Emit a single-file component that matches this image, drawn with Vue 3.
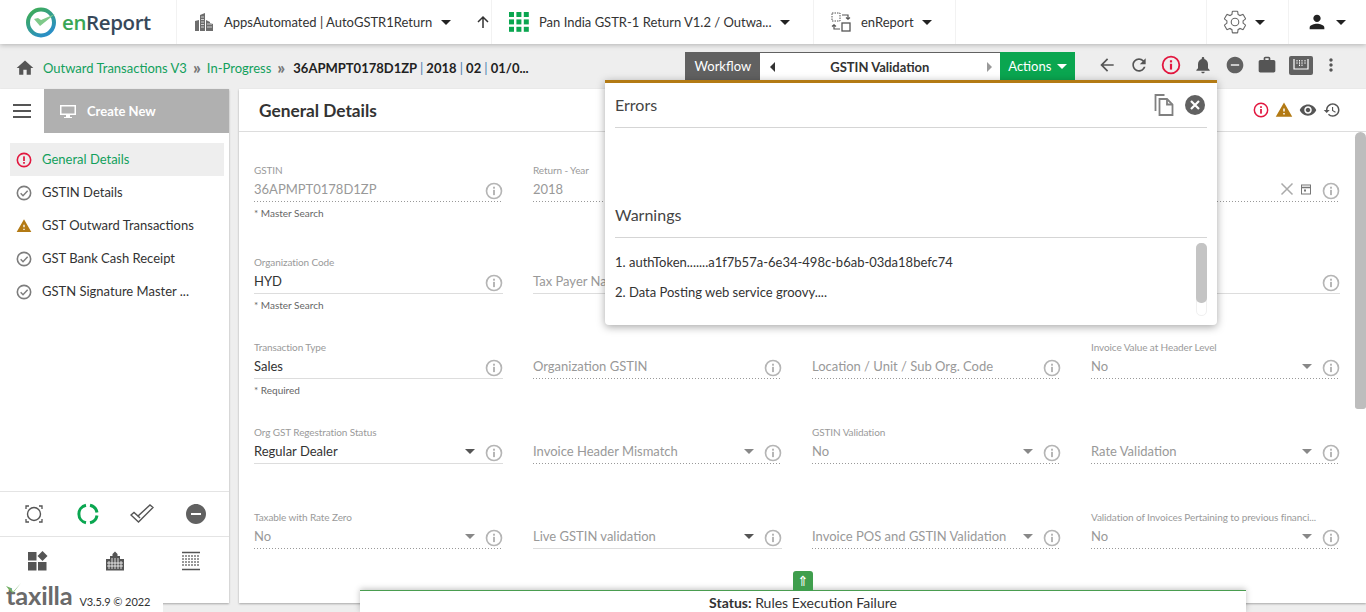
<template>
  <div class="page">
    <svg class="defs" width="0" height="0">
      <symbol id="i-info" viewBox="0 0 24 24">
        <circle cx="12" cy="12" r="10" fill="none" stroke="currentColor" stroke-width="2.200" />
        <rect x="10.700" y="10.500" width="2.600" height="7" fill="currentColor" />
        <rect x="10.700" y="6.300" width="2.600" height="2.600" fill="currentColor" />
      </symbol>
      <symbol id="i-error" viewBox="0 0 24 24">
        <circle cx="12" cy="12" r="10" fill="none" stroke="currentColor" stroke-width="2.400" />
        <rect x="10.700" y="6.500" width="2.600" height="7" fill="currentColor" />
        <rect x="10.700" y="15" width="2.600" height="2.600" fill="currentColor" />
      </symbol>
      <symbol id="i-check" viewBox="0 0 24 24">
        <circle cx="12" cy="12" r="10" fill="none" stroke="currentColor" stroke-width="2.400" />
        <path d="M7 12.500l3.500 3.500L17.500 8.500" fill="none" stroke="currentColor" stroke-width="2.200" />
      </symbol>
      <symbol id="i-warn" viewBox="0 0 24 24">
        <path d="M1 21h22L12 2 1 21zm12-3h-2v-2h2v2zm0-4h-2v-4h2v4z" fill="currentColor" />
      </symbol>
      <symbol id="i-minus" viewBox="0 0 24 24">
        <path d="M12 2C6.480 2 2 6.480 2 12s4.480 10 10 10 10-4.480 10-10S17.520 2 12 2zm5 11H7v-2h10v2z" fill="currentColor" />
      </symbol>
    </svg>

    <header class="topbar">
      <div class="logo">
        <svg width="32" height="32" viewBox="0 0 32 32">
          <defs>
            <linearGradient id="ring" x1="0" y1="0" x2="0.6" y2="1">
              <stop offset="0" stop-color="#3fae4f" />
              <stop offset="1" stop-color="#2a8fc4" />
            </linearGradient>
          </defs>
          <circle cx="16" cy="16.500" r="13" fill="none" stroke="url(#ring)" stroke-width="4" />
          <path d="M9 13l6 7L30 8l-14 6-3-2z" fill="#7fc98a" />
        </svg>
        <span class="logo-text"><span class="en">en</span>Report</span>
      </div>

      <div class="seg seg-apps">
        <svg class="seg-icon" width="20" height="20" viewBox="0 0 20 20">
          <path d="M1 19V9l4-1v11zM6 19V3l5-2v18zM12 19V8l4 2v1l3 1v7z" fill="#6d6d6d" />
          <path d="M7 5h3M7 7.500h3M7 10h3M7 12.500h3M7 15h3M13 12h5M13 15h5" stroke="#e8e8e8" stroke-width="0.800" />
        </svg>
        <span class="seg-text">AppsAutomated | AutoGSTR1Return</span>
        <span class="caret"></span>
        <svg class="up" width="14" height="14" viewBox="0 0 14 14">
          <path d="M7 13V2M2 7l5-5 5 5" fill="none" stroke="#333" stroke-width="1.500" />
        </svg>
      </div>

      <div class="seg seg-pan">
        <svg class="seg-icon" width="20" height="20" viewBox="0 0 20 20" fill="#0aa650">
          <rect v-for="c in gridCells" :key="c.k" :x="c.x" :y="c.y" width="5" height="5" />
        </svg>
        <span class="seg-text">Pan India GSTR-1 Return V1.2 / Outwa...</span>
        <span class="caret"></span>
      </div>

      <div class="seg seg-en">
        <svg class="seg-icon" width="20" height="20" viewBox="0 0 20 20" fill="none" stroke="#555">
          <rect x="1" y="1" width="8" height="8" stroke-dasharray="1.500 1" />
          <rect x="11" y="11" width="8" height="8" stroke-width="1.300" />
          <path d="M11 3h6v4M15 5.500l2 1.800 2-1.800M9 17H3v-4M1 14.500l2-1.800 2 1.800" stroke-width="1.200" />
        </svg>
        <span class="seg-text">enReport</span>
        <span class="caret"></span>
      </div>

      <div class="top-spacer"></div>

      <div class="seg seg-gear">
        <svg width="26" height="26" viewBox="0 0 24 24" fill="none" stroke="#666" stroke-width="1">
          <path d="M19.430 12.980c.04-.32.07-.64.07-.98s-.03-.66-.07-.98l2.110-1.650c.19-.15.24-.42.12-.64l-2-3.460c-.12-.22-.39-.3-.61-.22l-2.490 1c-.52-.4-1.080-.73-1.690-.98l-.38-2.650C14.460 2.180 14.250 2 14 2h-4c-.25 0-.46.18-.49.42l-.38 2.650c-.61.25-1.170.59-1.690.98l-2.490-1c-.23-.09-.49 0-.61.22l-2 3.460c-.13.22-.07.49.12.64l2.110 1.650c-.04.32-.07.65-.07.98s.03.66.07.98l-2.110 1.650c-.19.15-.24.42-.12.64l2 3.460c.12.22.39.3.61.22l2.490-1c.52.4 1.080.73 1.690.98l.38 2.650c.03.24.24.42.49.42h4c.25 0 .46-.18.49-.42l.38-2.650c.61-.25 1.170-.59 1.690-.98l2.490 1c.23.09.49 0 .61-.22l2-3.460c.12-.22.07-.49-.12-.64l-2.110-1.650z" />
          <circle cx="12" cy="12" r="3.500" />
        </svg>
        <span class="caret"></span>
      </div>
      <div class="seg seg-user">
        <svg width="22" height="22" viewBox="0 0 24 24" fill="#222">
          <path d="M12 12c2.210 0 4-1.790 4-4s-1.790-4-4-4-4 1.790-4 4 1.790 4 4 4zm0 2c-2.670 0-8 1.340-8 4v2h16v-2c0-2.660-5.330-4-8-4z" />
        </svg>
        <span class="caret"></span>
      </div>
    </header>

    <div class="crumbs">
      <svg class="home" width="20" height="20" viewBox="0 0 24 24" fill="#555">
        <path d="M10 20v-6h4v6h5v-8h3L12 3 2 12h3v8z" />
      </svg>
      <span class="crumb-link">Outward Transactions V3</span>
      <span class="chev">»</span>
      <span class="crumb-link">In-Progress</span>
      <span class="chev">»</span>
      <span class="crumb-cur">36APMPT0178D1ZP <i>|</i> 2018 <i>|</i> 02 <i>|</i> 01/0...</span>

      <div class="workflow">
        <span class="wf-label">Workflow</span>
        <div class="wf-nav">
          <span class="tri-left"></span>
          <span class="wf-name">GSTIN Validation</span>
          <span class="tri-right"></span>
        </div>
        <span class="wf-actions">Actions<span class="caret caret-white"></span></span>
      </div>

      <div class="tools">
        <svg width="20" height="20" viewBox="0 0 24 24" fill="#555"><path d="M20 11H7.830l5.590-5.590L12 4l-8 8 8 8 1.410-1.410L7.830 13H20v-2z" /></svg>
        <svg width="20" height="20" viewBox="0 0 24 24" fill="#555"><path d="M17.650 6.350C16.200 4.900 14.210 4 12 4c-4.420 0-7.990 3.580-7.990 8s3.570 8 7.990 8c3.730 0 6.840-2.550 7.730-6h-2.080c-.82 2.330-3.040 4-5.650 4-3.310 0-6-2.690-6-6s2.690-6 6-6c1.660 0 3.140.69 4.220 1.780L13 11h7V4l-2.350 2.350z" /></svg>
        <svg class="red" width="20" height="20"><use href="#i-info" /></svg>
        <svg width="20" height="20" viewBox="0 0 24 24" fill="#555"><path d="M12 22c1.100 0 2-.9 2-2h-4c0 1.100.9 2 2 2zm6-6v-5c0-3.070-1.630-5.640-4.500-6.320V4c0-.83-.67-1.500-1.500-1.500s-1.500.67-1.500 1.500v.68C7.640 5.360 6 7.920 6 11v5l-2 2v1h16v-1l-2-2z" /></svg>
        <svg class="grey" width="20" height="20"><use href="#i-minus" /></svg>
        <svg width="20" height="20" viewBox="0 0 24 24" fill="#555"><path d="M20 6h-4V4c0-1.110-.89-2-2-2h-4c-1.110 0-2 .89-2 2v2H4c-1.110 0-1.990.89-1.990 2L2 19c0 1.110.89 2 2 2h16c1.110 0 2-.89 2-2V8c0-1.110-.89-2-2-2zm-6 0h-4V4h4v2z" /></svg>
        <span class="kbd">
          <svg width="16" height="12" viewBox="0 0 16 12" fill="none" stroke="#fff">
            <path d="M1 0v10h14V0" stroke-width="1.200" />
            <path d="M4 1v4M6.500 1v6M9 1v6M12 1v4" stroke-dasharray="1.500 0.800" />
          </svg>
        </span>
        <svg class="dots" width="20" height="20" viewBox="0 0 24 24" fill="#555"><path d="M12 8c1.100 0 2-.9 2-2s-.9-2-2-2-2 .9-2 2 .9 2 2 2zm0 2c-1.100 0-2 .9-2 2s.9 2 2 2 2-.9 2-2-.9-2-2-2zm0 6c-1.100 0-2 .9-2 2s.9 2 2 2 2-.9 2-2-.9-2-2-2z" /></svg>
      </div>
    </div>

    <div class="body">
      <aside class="sidebar">
        <div class="side-top">
          <span class="burger"><i></i><i></i><i></i></span>
          <div class="create">
            <svg width="16" height="15" viewBox="0 0 16 15" fill="#fff">
              <path d="M0 1h16v10h-6v2h2v1H4v-1h2v-2H0zM1.500 2.500v7h13v-7z" fill-rule="evenodd" />
            </svg>
            <span>Create New</span>
          </div>
        </div>

        <nav class="side-nav">
          <div v-for="item in navItems" :key="item.name" class="nav-item" :class="{ active: item.active }">
            <svg width="16" height="16" :class="item.cls"><use :href="item.icon" /></svg>
            <span class="nav-text">{{ item.name }}</span>
          </div>
        </nav>

        <div class="side-row side-row-a">
          <svg width="20" height="20" viewBox="0 0 20 20" fill="none" stroke="#555">
            <circle cx="10" cy="10" r="6.500" stroke-width="1.400" />
            <path d="M2 5V2h3M15 2h3v3M18 15v3h-3M5 18H2v-3" stroke-width="1.300" />
          </svg>
          <svg width="22" height="22" viewBox="0 0 22 22" fill="none" stroke="#0aa650" stroke-width="3">
            <path d="M9 2.200A9 9 0 0 0 9 19.800M13 2.200A9 9 0 0 1 20 9.500M20 12.500A9 9 0 0 1 13 19.800" />
          </svg>
          <svg width="24" height="20" viewBox="0 0 24 20" fill="none" stroke="#555" stroke-width="1.400">
            <path d="M1 11l3-2.500 4 3.500L20 1l3 2.500L8.500 18z" />
            <path d="M8 12l2 2" />
          </svg>
          <svg class="grey" width="24" height="24"><use href="#i-minus" /></svg>
        </div>
        <div class="side-row side-row-b">
          <svg width="20" height="20" viewBox="0 0 20 20" fill="#555">
            <rect x="0" y="1" width="8.500" height="8.500" />
            <rect x="0" y="11" width="8.500" height="8.500" />
            <rect x="10" y="11" width="8.500" height="8.500" />
            <path d="M14.500 0l5 5-5 5-5-5z" />
          </svg>
          <svg width="20" height="20" viewBox="0 0 20 20" fill="#555">
            <path d="M1 19.500V8h4V5h2.500V3L10 .5 12.500 3v2H15v3h4v11.500z" />
            <path d="M4 10v8M7 7v11M10 7v11M13 7v11M16 10v8M2 12h16M2 15h16" stroke="#fff" stroke-width="0.800" />
          </svg>
          <svg width="20" height="20" viewBox="0 0 20 20" fill="none" stroke="#555">
            <path d="M1 1.500h18M1 18.500h18" stroke-width="1.600" />
            <path d="M1 5h18M1 8h18M1 11h18M1 14h18" stroke-dasharray="2 1" stroke-width="1.300" opacity="0.800" />
          </svg>
        </div>
      </aside>

      <main class="card">
        <div class="card-head">
          <h1>General Details</h1>
          <div class="head-icons">
            <svg class="red" width="16" height="16"><use href="#i-info" /></svg>
            <svg class="amber" width="18" height="18"><use href="#i-warn" /></svg>
            <svg width="18" height="18" viewBox="0 0 24 24" fill="#555"><path d="M12 4.500C7 4.500 2.730 7.610 1 12c1.730 4.390 6 7.500 11 7.500s9.270-3.110 11-7.500c-1.730-4.390-6-7.500-11-7.500zM12 17c-2.760 0-5-2.240-5-5s2.240-5 5-5 5 2.240 5 5-2.240 5-5 5zm0-8c-1.660 0-3 1.340-3 3s1.340 3 3 3 3-1.340 3-3-1.340-3-3-3z" /></svg>
            <svg width="18" height="18" viewBox="0 0 24 24" fill="#555"><path d="M13 3c-4.970 0-9 4.030-9 9H1l3.890 3.890.07.14L9 12H6c0-3.870 3.130-7 7-7s7 3.130 7 7-3.130 7-7 7c-1.930 0-3.680-.79-4.940-2.060l-1.420 1.420C8.270 19.990 10.510 21 13 21c4.970 0 9-4.030 9-9s-4.030-9-9-9zm-1 5v5l4.280 2.540.72-1.210-3.500-2.080V8H12z" /></svg>
          </div>
        </div>

        <div class="form">
          <div v-for="(f, i) in fields" :key="i" class="field">
            <div class="f-label">{{ f.label }}</div>
            <div class="f-row">
              <div class="f-input" :class="{ solid: f.solid, muted: f.muted }">
                <span class="f-value">{{ f.value }}</span>
                <svg v-if="f.clear" class="f-clear" width="14" height="14" viewBox="0 0 14 14" fill="none" stroke="#aaa" stroke-width="1.500">
                  <path d="M1.500 1.500l11 11M12.500 1.500l-11 11" />
                </svg>
                <svg v-if="f.clear" class="f-cal" width="12" height="12" viewBox="0 0 12 12" fill="none" stroke="#777">
                  <rect x="1.500" y="2" width="9" height="9" />
                  <path d="M1.500 4.500h9" stroke-width="1.500" />
                  <rect x="4" y="6.500" width="2" height="2" fill="#777" stroke="none" />
                </svg>
                <span v-if="f.select" class="f-caret" :class="{ strong: f.solid }"></span>
              </div>
              <svg class="f-info" width="18" height="18"><use href="#i-info" /></svg>
            </div>
            <div v-if="f.hint" class="f-hint">{{ f.hint }}</div>
          </div>
        </div>

        <div class="main-scroll"></div>
      </main>
    </div>

    <section class="popover">
      <div class="pop-head">
        <span class="pop-title">Errors</span>
        <svg class="pop-copy" width="20" height="22" viewBox="0 0 20 22" fill="none" stroke="#808080" stroke-width="1.800">
          <path d="M1.500 17V1h9" />
          <path d="M5.500 5h7.500l5.500 5.500V21H5.500z" />
          <path d="M13 5v5.500h5.500" />
        </svg>
        <svg width="20" height="20" viewBox="0 0 20 20">
          <circle cx="10" cy="10" r="10" fill="#616161" />
          <path d="M6 6l8 8M14 6l-8 8" stroke="#fff" stroke-width="2.200" />
        </svg>
      </div>
      <div class="pop-errors"></div>
      <div class="pop-head">
        <span class="pop-title">Warnings</span>
      </div>
      <div class="pop-list">
        <p>1. authToken.......a1f7b57a-6e34-498c-b6ab-03da18befc74</p>
        <p>2. Data Posting web service groovy....</p>
        <div class="pop-track"><div class="pop-thumb"></div></div>
      </div>
    </section>

    <div class="brand">
      <span class="brand-mark">
        <svg class="brand-tick" width="16" height="12" viewBox="0 0 16 12"><path d="M0 3l5 2 2 4L15 0 7 10 4 8z" fill="#6fae62" /></svg>
        taxilla
      </span>
      <span class="brand-ver">V3.5.9 © 2022</span>
    </div>

    <div class="status">
      <button class="status-tab">⇑</button>
      <span class="status-key">Status:</span> Rules Execution Failure
    </div>
  </div>
</template>

<script setup>
const gridCells = []
for (let r = 0; r < 3; r++) {
  for (let c = 0; c < 3; c++) {
    gridCells.push({ k: `${r}-${c}`, x: c * 7.4, y: r * 7.4 })
  }
}

const navItems = [
  { name: 'General Details', icon: '#i-error', active: true, cls: 'red' },
  { name: 'GSTIN Details', icon: '#i-check', cls: 'soft' },
  { name: 'GST Outward Transactions', icon: '#i-warn', cls: 'amber' },
  { name: 'GST Bank Cash Receipt', icon: '#i-check', cls: 'soft' },
  { name: 'GSTN Signature Master ...', icon: '#i-check', cls: 'soft' },
]

const fields = [
  { label: 'GSTIN', value: '36APMPT0178D1ZP', muted: true, hint: '* Master Search' },
  { label: 'Return - Year', value: '2018', muted: true },
  { label: '', value: '', muted: true },
  { label: '', value: '', muted: true, clear: true },

  { label: 'Organization Code', value: 'HYD', solid: true, hint: '* Master Search' },
  { label: '', value: 'Tax Payer Name', solid: true, muted: true },
  { label: '', value: '', solid: true, muted: true },
  { label: '', value: '', solid: true, muted: true },

  { label: 'Transaction Type', value: 'Sales', solid: true, hint: '* Required' },
  { label: '', value: 'Organization GSTIN', muted: true },
  { label: '', value: 'Location / Unit / Sub Org. Code', muted: true },
  { label: 'Invoice Value at Header Level', value: 'No', select: true, muted: true },

  { label: 'Org GST Regestration Status', value: 'Regular Dealer', select: true, solid: true },
  { label: '', value: 'Invoice Header Mismatch', select: true, muted: true },
  { label: 'GSTIN Validation', value: 'No', select: true, muted: true },
  { label: '', value: 'Rate Validation', select: true, muted: true },

  { label: 'Taxable with Rate Zero', value: 'No', select: true, muted: true },
  { label: '', value: 'Live GSTIN validation', select: true, solid: true, muted: true },
  { label: '', value: 'Invoice POS and GSTIN Validation', select: true, muted: true },
  { label: 'Validation of Invoices Pertaining to previous financi...', value: 'No', select: true, muted: true },
]
</script>

<style>
html,
body {
  margin: 0;
  background: #eeeeee;
}
</style>

<style scoped>
.page {
  position: relative;
  width: 1366px;
  height: 612px;
  overflow: hidden;
  display: flex;
  flex-direction: column;
  background: #eeeeee;
  font-family: Lato, "Open Sans", sans-serif;
  font-size: 13px;
  color: #333333;
}

.defs {
  position: absolute;
}

.red {
  color: #e2173f;
}

.amber {
  color: #b37a14;
}

.grey {
  color: #616161;
}

.soft {
  color: #7d7d7d;
}

.caret {
  display: inline-block;
  width: 0;
  height: 0;
  border-left: 5px solid transparent;
  border-right: 5px solid transparent;
  border-top: 5px solid #222222;
}

/* top bar */
.topbar {
  height: 44px;
  flex: none;
  display: flex;
  background: #ffffff;
  box-shadow: 0 1px 5px rgba(0, 0, 0, 0.25);
  position: relative;
  z-index: 2;
}

.logo {
  width: 177px;
  flex: none;
  display: flex;
  align-items: center;
  padding-left: 25px;
  gap: 5px;
  box-sizing: border-box;
  border-right: 1px solid #f2f2f2;
}

.logo-text {
  font-family: "Open Sans", sans-serif;
  font-size: 20.500px;
  font-weight: 600;
  letter-spacing: -0.4px;
  color: #37485a;
}

.en {
  color: #3aa655;
}

.seg {
  display: flex;
  align-items: center;
  flex: none;
  box-sizing: border-box;
  border-right: 1px solid #f2f2f2;
}

.seg-text {
  font-size: 13px;
  color: #333333;
}

.seg-apps {
  width: 315px;
  padding-left: 17px;
}

.seg-apps .seg-text {
  margin-left: 10px;
  margin-right: 9px;
}

.up {
  margin-left: 25px;
}

.seg-pan {
  width: 322px;
  padding-left: 17px;
}

.seg-pan .seg-text {
  margin-left: 10px;
  margin-right: 8px;
}

.seg-en {
  width: 142px;
  padding-left: 17px;
}

.seg-en .seg-text {
  margin-left: 10px;
  margin-right: 8px;
}

.top-spacer {
  flex: 1;
}

.seg-gear {
  width: 82px;
  padding-left: 15px;
  gap: 7px;
  border-left: 1px solid #f2f2f2;
  border-right: 0;
}

.seg-user {
  width: 78px;
  padding-left: 17px;
  gap: 8px;
  border-left: 1px solid #f2f2f2;
  border-right: 0;
}

/* breadcrumb */
.crumbs {
  height: 45px;
  flex: none;
  display: flex;
  align-items: center;
  padding: 2px 0 0 15px;
  box-sizing: border-box;
}

.home {
  margin-right: 8px;
}

.crumb-link {
  color: #12a05c;
}

.chev {
  width: 10px;
  margin: 0 5px;
  text-align: center;
  color: #777777;
  font-weight: 900;
  font-size: 17px;
  line-height: 14px;
}

.crumb-cur {
  font-weight: 700;
  color: #222222;
  width: 392px;
  margin-left: 2px;
  flex: none;
}

.crumb-cur i {
  font-style: normal;
  font-weight: 400;
  color: #4a7fb0;
}

.workflow {
  display: flex;
  height: 28px;
  align-self: flex-start;
  margin-top: 6px;
}

.wf-label {
  width: 75px;
  background: #616161;
  color: #ffffff;
  display: flex;
  align-items: center;
  justify-content: center;
}

.wf-nav {
  width: 240px;
  box-sizing: border-box;
  background: #ffffff;
  border-top: 1px solid #616161;
  display: flex;
  align-items: center;
  padding: 0 8px 0 10px;
}

.wf-name {
  flex: 1;
  padding-right: 3px;
  text-align: center;
  font-weight: 700;
  color: #333333;
}

.tri-left {
  border-top: 5px solid transparent;
  border-bottom: 5px solid transparent;
  border-right: 5px solid #333333;
}

.tri-right {
  border-top: 5px solid transparent;
  border-bottom: 5px solid transparent;
  border-left: 5px solid #999999;
}

.wf-actions {
  width: 75px;
  background: #0aa650;
  color: #ffffff;
  display: flex;
  align-items: center;
  justify-content: center;
  gap: 6px;
}

.caret-white {
  border-top-color: #ffffff;
}

.tools {
  margin-left: 22px;
  display: flex;
  align-items: center;
  gap: 12px;
  margin-top: -5px;
}

.kbd {
  width: 24px;
  height: 19px;
  border-radius: 2px;
  background: #616161;
  display: flex;
  align-items: center;
  justify-content: center;
}

.dots {
  margin-left: -4px;
}

/* body */
.body {
  flex: 1;
  display: flex;
  gap: 10px;
  padding-bottom: 9px;
  min-height: 0;
}

.sidebar {
  width: 229px;
  flex: none;
  background: #ffffff;
  display: flex;
  flex-direction: column;
  box-shadow: 0 1px 2px rgba(0, 0, 0, 0.3);
}

.side-top {
  display: flex;
  height: 44px;
  flex: none;
}

.burger {
  width: 44px;
  display: flex;
  flex-direction: column;
  justify-content: center;
  align-items: center;
  gap: 4px;
}

.burger i {
  display: block;
  width: 18px;
  height: 2px;
  background: #555555;
}

.create {
  flex: 1;
  background: #b0b0b0;
  color: #ffffff;
  font-weight: 700;
  display: flex;
  align-items: center;
  padding-left: 16px;
  gap: 11px;
}

.side-nav {
  flex: 1;
  padding: 10px 5px 0 10px;
}

.nav-item {
  height: 33px;
  display: flex;
  align-items: center;
  padding-left: 6px;
  gap: 10px;
  color: #333333;
}

.nav-text {
  padding-bottom: 2px;
}

.nav-item.active {
  background: #eeeeee;
  color: #12a05c;
}

.side-row {
  display: grid;
  align-items: center;
  justify-items: center;
  border-top: 1px solid #e4e4e4;
  flex: none;
  box-sizing: border-box;
}

.side-row-a {
  height: 45px;
  grid-template-columns: repeat(4, 54px);
  padding-left: 7px;
}

.side-row-b {
  height: 67px;
  grid-template-columns: repeat(3, 76.500px);
  align-items: start;
  padding-top: 14px;
}

/* main card */
.card {
  flex: 1;
  min-width: 0;
  background: #ffffff;
  position: relative;
  box-shadow: 0 1px 2px rgba(0, 0, 0, 0.3);
}

.card-head {
  height: 42px;
  border-bottom: 1px solid #dddddd;
  display: flex;
  align-items: center;
  padding: 0 25px 0 20px;
}

.card-head h1 {
  margin: 0;
  font-size: 17.300px;
  font-weight: 700;
  color: #333333;
  flex: 1;
}

.head-icons {
  display: flex;
  align-items: center;
  gap: 6px;
}

.form {
  padding: 33px 0 0 15px;
  display: grid;
  grid-template-columns: repeat(4, 249px);
  grid-template-rows: 92px repeat(4, 85px);
  column-gap: 30px;
}

.f-label {
  font-size: 10px;
  line-height: 10px;
  height: 12px;
  letter-spacing: -0.1px;
  color: #9a9a9a;
  white-space: nowrap;
}

.f-row {
  display: flex;
  align-items: flex-end;
  width: 249px;
  height: 25px;
  box-sizing: border-box;
  position: relative;
}

.f-input {
  flex: 1;
  height: 25px;
  box-sizing: border-box;
  display: flex;
  align-items: center;
  padding-bottom: 1px;
  background: repeating-linear-gradient(to right, #999999 0 1px, transparent 1px 3px) left bottom / 100% 1px no-repeat;
  min-width: 0;
}

.f-input.solid {
  background: linear-gradient(#dddddd, #dddddd) left bottom / 100% 1px no-repeat;
}

.f-value {
  flex: 1;
  font-size: 13px;
  white-space: nowrap;
  color: #333333;
}

.f-input.muted .f-value {
  color: #999999;
}

.f-caret {
  width: 0;
  height: 0;
  margin-right: 28px;
  border-left: 5px solid transparent;
  border-right: 5px solid transparent;
  border-top: 5px solid #888888;
}

.f-caret.strong {
  border-top-color: #555555;
}

.f-clear {
  margin-right: 6px;
}

.f-cal {
  margin-right: 28px;
}

.f-info {
  position: absolute;
  right: 0;
  top: 5px;
  color: #b5b5b5;
}

.f-hint {
  font-size: 10px;
  line-height: 12px;
  margin-top: 5px;
  color: #666666;
}

.main-scroll {
  position: absolute;
  right: 0;
  top: 43px;
  width: 11px;
  height: 277px;
  background: #bdbdbd;
  border-radius: 6px 6px 3px 3px;
}

/* errors popover */
.popover {
  position: absolute;
  left: 605px;
  top: 80px;
  width: 612px;
  height: 245px;
  box-sizing: border-box;
  border-top: 3px solid #b37a14;
  border-radius: 0 0 4px 4px;
  background: #ffffff;
  box-shadow: 0 2px 8px rgba(0, 0, 0, 0.35);
  padding: 0 10px;
  z-index: 3;
}

.pop-head {
  height: 45px;
  box-sizing: border-box;
  border-bottom: 1px solid #d5d5d5;
  display: flex;
  align-items: center;
  padding-right: 2px;
}

.pop-title {
  flex: 1;
  font-size: 16px;
  padding-bottom: 2px;
  color: #444444;
}

.pop-copy {
  margin-right: 11px;
}

.pop-errors {
  height: 65px;
}

.pop-list {
  position: relative;
  height: 87px;
  padding-top: 15px;
  box-sizing: border-box;
}

.pop-list p {
  margin: 0 0 12px;
  font-size: 13px;
  line-height: 18px;
  color: #333333;
}

.pop-track {
  position: absolute;
  right: 0;
  top: 5px;
  width: 11px;
  height: 73px;
  border-radius: 5px;
  border: 1px solid #f0f0f0;
  box-sizing: border-box;
}

.pop-thumb {
  margin: -1px;
  height: 60px;
  border-radius: 5px;
  background: #c4c4c4;
}

/* bottom left brand */
.brand {
  position: absolute;
  left: 0;
  bottom: 0;
  width: 163px;
  height: 29px;
  display: flex;
  align-items: flex-end;
  padding-left: 6px;
  box-sizing: border-box;
  z-index: 3;
  background: linear-gradient(transparent 0 20px, #ffffff 20px);
}

.brand-mark {
  position: relative;
  font-size: 25.500px;
  font-weight: 700;
  line-height: 29px;
  padding-bottom: 2px;
  color: #6a6a6a;
  letter-spacing: -0.2px;
}

.brand-tick {
  position: absolute;
  left: 0;
  top: 2px;
}

.brand-ver {
  margin-left: 7px;
  font-size: 11px;
  line-height: 20px;
  letter-spacing: -0.1px;
  color: #333333;
}

/* status strip */
.status {
  position: absolute;
  left: 360px;
  bottom: 0;
  width: 886px;
  height: 22px;
  box-sizing: border-box;
  background: #ffffff;
  border-top: 1px solid #4a9d50;
  box-shadow: 0 -1px 6px rgba(0, 0, 0, 0.25);
  text-align: center;
  font-size: 14px;
  line-height: 24px;
  color: #333333;
  z-index: 3;
}

.status-key {
  font-weight: 700;
}

.status-tab {
  position: absolute;
  left: 433px;
  top: -20px;
  width: 20px;
  height: 20px;
  padding: 0;
  border: 0;
  border-radius: 3px 3px 0 0;
  background: #3f9e4d;
  color: #ffffff;
  font-size: 14px;
  line-height: 20px;
  font-family: "DejaVu Sans", sans-serif;
}
</style>
